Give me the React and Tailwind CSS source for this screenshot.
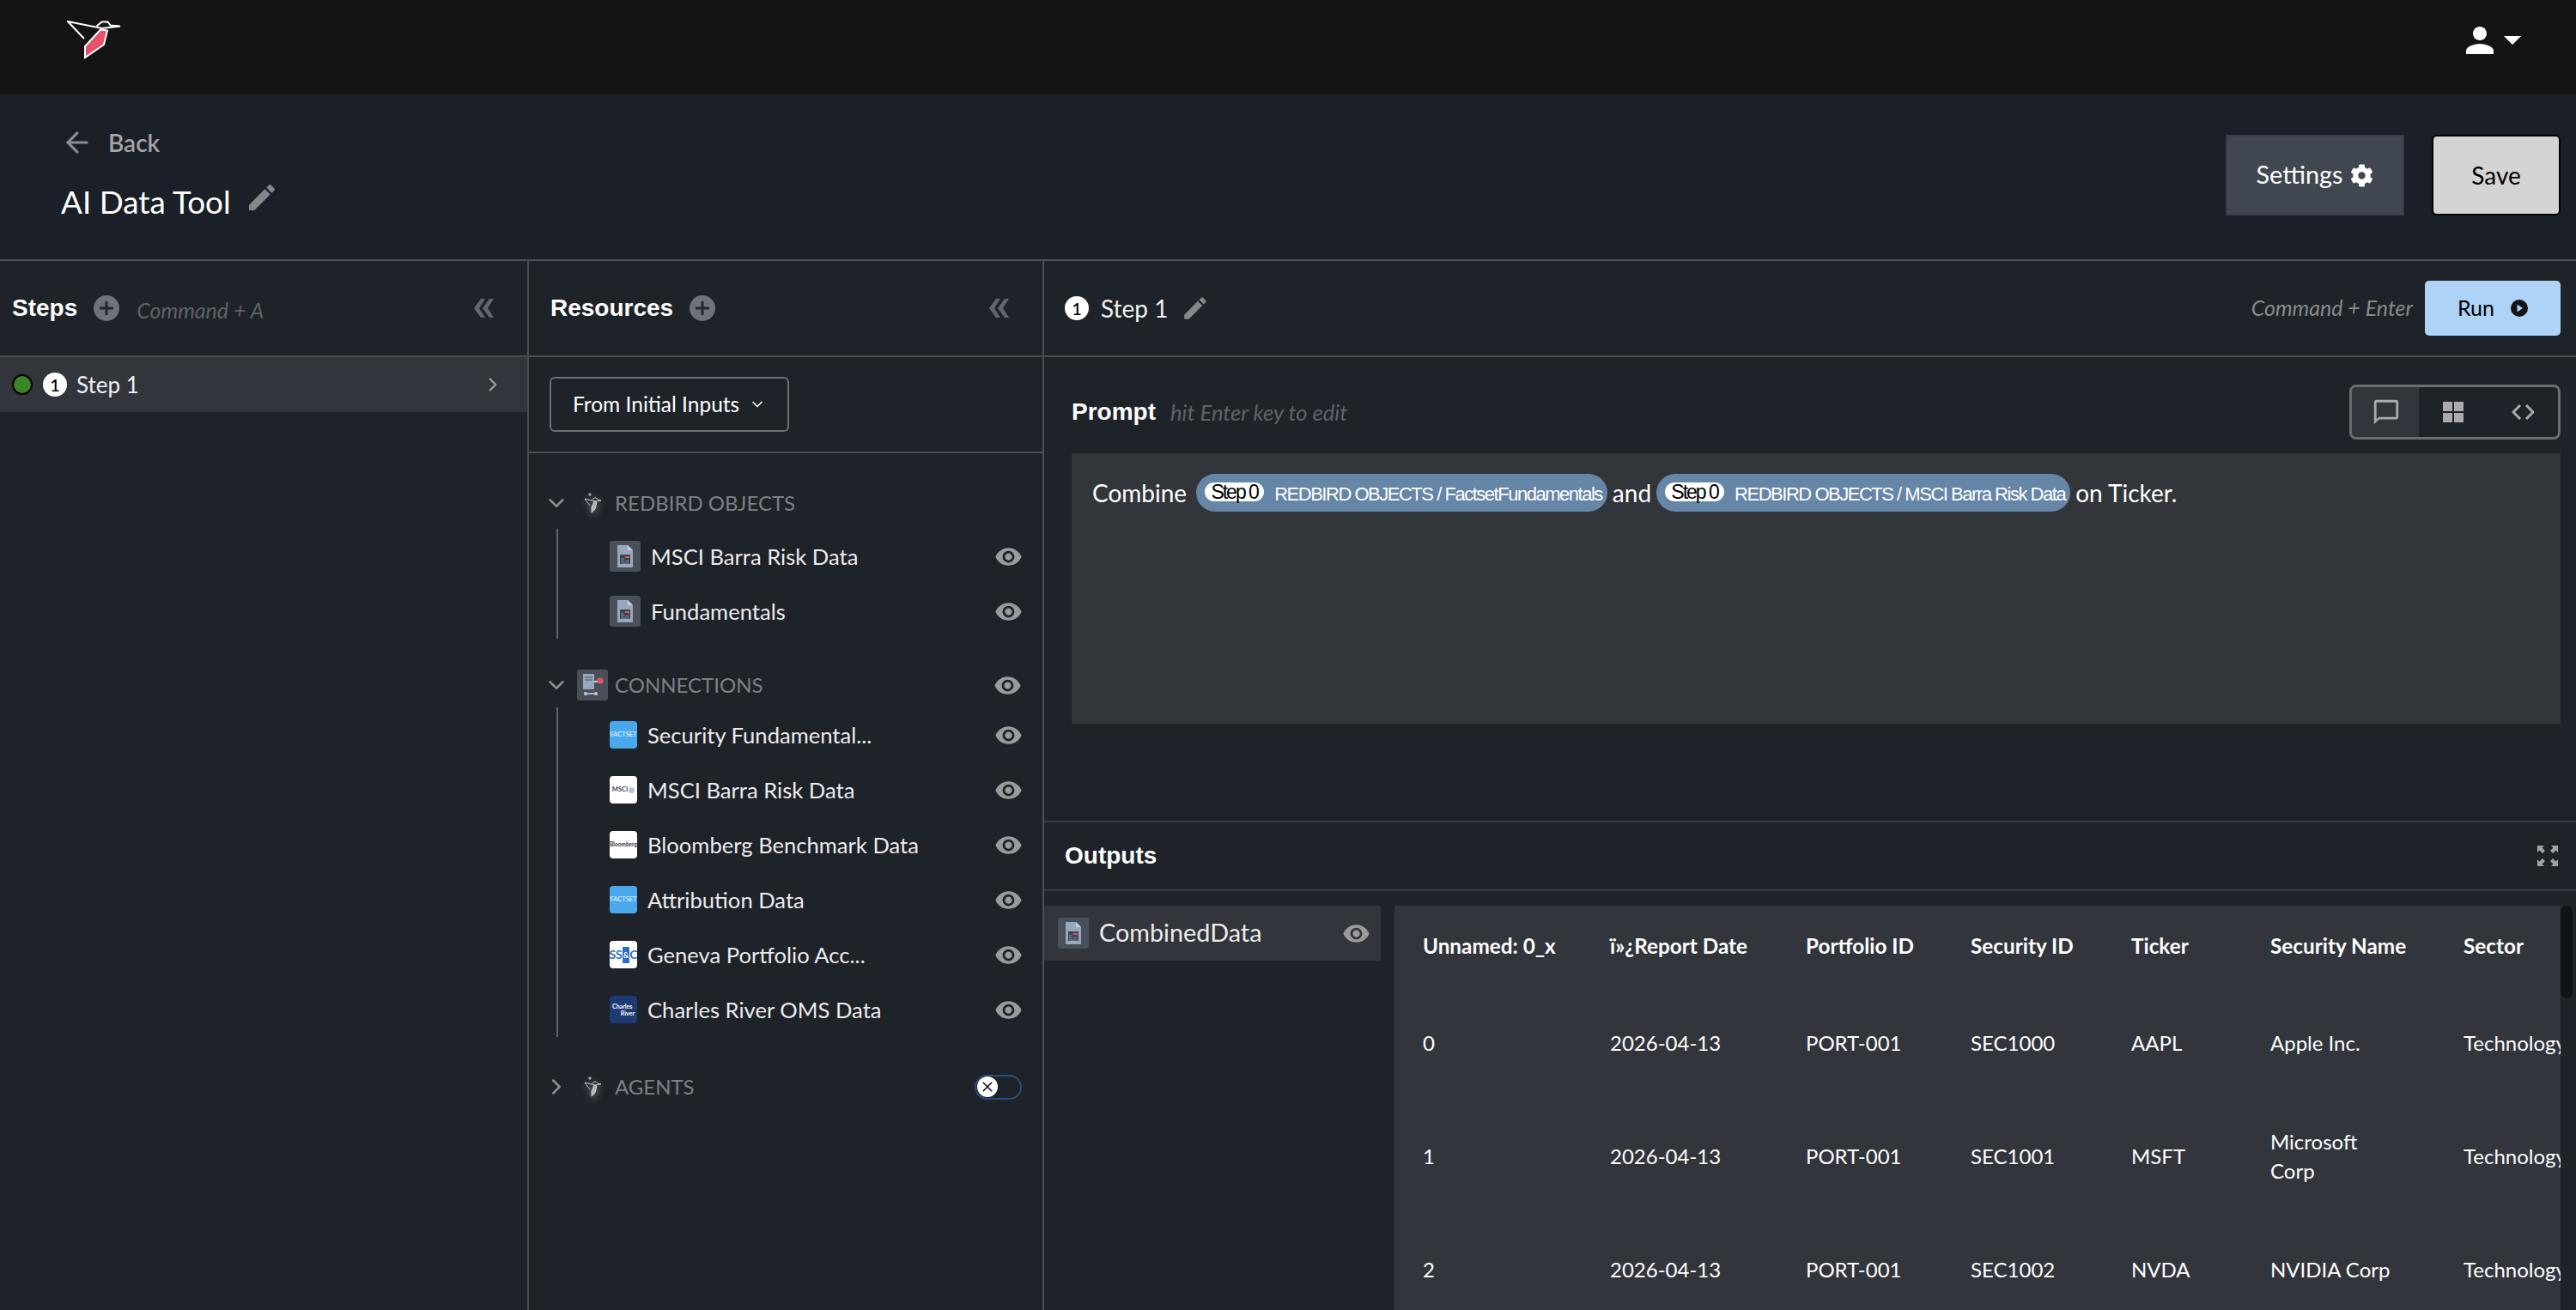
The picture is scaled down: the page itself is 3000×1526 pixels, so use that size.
import { ArrowLeft, ChevronDown, ChevronRight } from 'lucide-react'
import { MdEdit, MdVisibility, MdPerson, MdChatBubbleOutline, MdClose } from 'react-icons/md'
import { FaCog } from 'react-icons/fa'

const arial = "[font-family:'Liberation_Sans',Arial,sans-serif]"

function Logo({ className }) {
  return (
    <svg viewBox="0 0 63 46" className={className} fill="none" stroke="#fff" strokeWidth="2">
      <path d="M20 21 1 1l40 8 21-2.500-11.500-1-3-4h-7l-6 5" />
      <path d="M39 10.500 47 11.500 43 28 21 43 21 30Z" fill="#e5526a" />
    </svg>
  )
}

function BirdIcon() {
  return (
    <div className="w-[36px] h-[36px] flex items-center justify-center">
      <svg viewBox="0 0 20 24" className="w-[20px] h-[24px] drop-shadow-[0_3px_4px_rgba(255,255,255,0.45)]" fill="none" stroke="#d5d7da" strokeWidth="0.9">
        <path d="M7 0v4M5 2h4" />
        <path d="M7 15 1 7l12 3 7-1-4-1-2-2h-2l-3 3" />
        <path d="M12 10l3 1-2 8-4 4v-6z" fill="#aeb1b5" />
      </svg>
    </div>
  )
}

function DocIcon() {
  return (
    <div className="w-[36px] h-[36px] shrink-0 rounded-[3px] bg-[#4a505a] flex items-center justify-center">
      <svg viewBox="0 0 20 26" className="w-[20px] h-[26px]">
        <path d="M1 0h12l6 6v20H1z" fill="#97a7bd" />
        <path d="M13 0l6 6h-6z" fill="#c5d0de" />
        <rect x="4" y="11" width="12" height="11" fill="#3d4450" />
        <rect x="10" y="13" width="5" height="2" fill="#e5526a" />
        <path d="M5 16h4M5 18.500h4M10.500 18.500h4M5 21h10" stroke="#97a7bd" strokeWidth="0.8" />
      </svg>
    </div>
  )
}

function ConnIcon() {
  return (
    <div className="w-[36px] h-[36px] rounded-[3px] bg-[#4a505a] flex items-center justify-center">
      <svg viewBox="0 0 26 28" className="w-[26px] h-[28px]">
        <rect x="2" y="1" width="13" height="18" fill="#97a7bd" />
        <path d="M4 5h9M4 8h9" stroke="#4a505a" strokeWidth="1.200" />
        <path d="M15 10h5" stroke="#fff" strokeWidth="1.500" />
        <circle cx="22" cy="9" r="3.500" fill="#e5526a" />
        <path d="M5 24h12" stroke="#c5d0de" strokeWidth="1.500" />
        <circle cx="5" cy="24" r="2" fill="#c5d0de" />
        <circle cx="17" cy="24" r="2" fill="#c5d0de" />
      </svg>
    </div>
  )
}

function PlusCircle() {
  return (
    <svg viewBox="0 0 30 30" className="w-[30px] h-[30px] shrink-0">
      <circle cx="15" cy="15" r="15" fill="#6f7278" />
      <path d="M15 7v16M7 15h16" stroke="#23262c" strokeWidth="3" />
    </svg>
  )
}

function Collapse() {
  return (
    <svg viewBox="0 0 25 22" className="w-[25px] h-[22px]" fill="#63666c">
      <path d="M9 0h5L7 11l7 11H9L1 11zM19 0h5l-7 11 7 11h-5L11 11z" />
    </svg>
  )
}

function Eye() {
  return <MdVisibility className="w-[33px] h-[33px] text-[#9a9b9d] shrink-0" />
}

function NumberBadge() {
  return (
    <span className="w-[28px] h-[28px] rounded-full bg-white text-black text-[20px] font-medium flex items-center justify-center shrink-0">1</span>
  )
}

function FactsetTile() {
  return (
    <div className="w-[32px] h-[32px] rounded-[4px] bg-[#4aa8ec] flex items-center justify-center overflow-hidden text-[#cfe8fb] text-[7.500px] font-bold">FACTSET</div>
  )
}

function MsciTile() {
  return (
    <div className="w-[32px] h-[32px] rounded-[4px] bg-white flex items-center justify-center gap-[1px] overflow-hidden text-[#3a3f55] text-[7.500px] font-bold">
      MSCI<span className="w-[7px] h-[7px] rounded-full bg-[#bcc2e4]" />
    </div>
  )
}

function BloombergTile() {
  return (
    <div className="w-[32px] h-[32px] rounded-[4px] bg-white flex items-center justify-center overflow-hidden text-[#333] text-[6.500px] font-bold">Bloomberg</div>
  )
}

function SsncTile() {
  return (
    <div className="w-[32px] h-[32px] rounded-[4px] bg-white flex items-center justify-center overflow-hidden text-[#2a6fc4] text-[14px] font-bold leading-none whitespace-nowrap">
      SS<span className="bg-[#2a6fc4] text-white text-[9px] py-[5px] px-[1px]">&amp;</span>C
    </div>
  )
}

function CharlesTile() {
  return (
    <div className="w-[32px] h-[32px] rounded-[4px] bg-[#1d3a72] flex flex-col justify-center overflow-hidden text-white text-[7px] leading-[8px] font-bold px-[3px]">
      <span>Charles</span>
      <span className="text-right">River</span>
    </div>
  )
}

const connections = [
  { name: 'Security Fundamental...', Tile: FactsetTile },
  { name: 'MSCI Barra Risk Data', Tile: MsciTile },
  { name: 'Bloomberg Benchmark Data', Tile: BloombergTile },
  { name: 'Attribution Data', Tile: FactsetTile },
  { name: 'Geneva Portfolio Acc...', Tile: SsncTile },
  { name: 'Charles River OMS Data', Tile: CharlesTile },
]

function SectionHeader({ label, icon, open = true, right }) {
  const Arrow = open ? ChevronDown : ChevronRight
  return (
    <div className="h-[44px] flex items-center pl-[17px] pr-[24px]">
      <Arrow className="w-[30px] h-[30px] text-[#8a8d91] shrink-0" strokeWidth={2} />
      <div className="ml-[9px] mr-[8px]">{icon}</div>
      <span className="flex-1 text-[24px] text-[#7d8085]">{label}</span>
      {right}
    </div>
  )
}

function ResourceRow({ icon, name }) {
  return (
    <div className="h-[64px] flex items-center gap-[12px] pl-[60px] pr-[23px]">
      {icon}
      <span className="flex-1 text-[25.600px] text-[#ececec] whitespace-nowrap mt-[1px]">{name}</span>
      <Eye />
    </div>
  )
}

function Chip({ children }) {
  return (
    <span className={`h-[44px] rounded-[22px] bg-[#6686a7] flex items-center pl-[10px] pr-[6px] text-white ${arial}`}>
      <span className="h-[22px] w-[69px] rounded-full bg-white text-black text-[23px] tracking-[-2px] flex items-center justify-center -mt-[2px]">Step 0</span>
      <span className="ml-[12px] text-[22px] tracking-[-1.480px] whitespace-nowrap mt-[3px]">{children}</span>
    </span>
  )
}

const columns = [
  { key: 'id', label: 'Unnamed: 0_x', width: 'w-[218px]' },
  { key: 'date', label: 'ï»¿Report Date', width: 'w-[228px]' },
  { key: 'portfolio', label: 'Portfolio ID', width: 'w-[192px]' },
  { key: 'security', label: 'Security ID', width: 'w-[187px]' },
  { key: 'ticker', label: 'Ticker', width: 'w-[162px]' },
  { key: 'name', label: 'Security Name', width: 'w-[225px]' },
  { key: 'sector', label: 'Sector', width: 'w-[200px]' },
]

const rows = [
  { id: '0', date: '2026-04-13', portfolio: 'PORT-001', security: 'SEC1000', ticker: 'AAPL', name: 'Apple Inc.', sector: 'Technology' },
  { id: '1', date: '2026-04-13', portfolio: 'PORT-001', security: 'SEC1001', ticker: 'MSFT', name: 'Microsoft Corp', sector: 'Technology' },
  { id: '2', date: '2026-04-13', portfolio: 'PORT-001', security: 'SEC1002', ticker: 'NVDA', name: 'NVIDIA Corp', sector: 'Technology' },
]

function DataTable() {
  return (
    <div className="flex-1 min-w-0 flex items-start">
      <div className="w-[1358px] h-full bg-[#32353c] overflow-hidden pl-[33px]">
        <table className="table-fixed w-[1412px] text-white text-[24px]">
          <thead>
            <tr className="h-[94px]">
              {columns.map((c) => (
                <th key={c.key} className={`${c.width} text-left font-bold text-[24.300px] p-0`}>{c.label}</th>
              ))}
            </tr>
          </thead>
          <tbody>
            {rows.map((r) => (
              <tr key={r.id} className="h-[132px]">
                {columns.map((c) => (
                  <td key={c.key} className="p-0 align-middle">
                    <div className="max-w-[150px] leading-[34px]">{r[c.key]}</div>
                  </td>
                ))}
              </tr>
            ))}
          </tbody>
        </table>
      </div>
      <div className="w-[14px] h-[108px] rounded-full bg-[#101318]" />
    </div>
  )
}

export default function App() {
  return (
    <div className="w-[3000px] h-[1526px] overflow-hidden flex flex-col bg-[#1e2229] text-white font-[Lato]">
      <header className="h-[110px] shrink-0 bg-[#141414] flex items-center justify-between pl-[78px] pr-[64px]">
        <Logo className="w-[63px] h-[46px] -mt-[16px]" />
        <div className="flex items-center gap-[4px] -mt-[16px]">
          <MdPerson className="w-[48px] h-[48px] text-white" />
          <svg viewBox="0 0 20 10" className="w-[20px] h-[10px]"><path d="M0 0h20L10 10z" fill="#fff" /></svg>
        </div>
      </header>

      <div className="h-[194px] shrink-0 bg-[#1b2028] border-b-2 border-[#4a4d52] flex justify-between pl-[71px] pr-[18px]">
        <div className="pt-[35px]">
          <div className="flex items-center gap-[17px] text-[#a2a4a7]">
            <ArrowLeft className="w-[38px] h-[38px] text-[#8a8d91]" strokeWidth={2} />
            <span className="text-[28px] font-semibold">Back</span>
          </div>
          <div className="mt-[26px] flex items-center gap-[16px]">
            <span className="text-[36.800px] leading-[44px]">AI Data Tool</span>
            <MdEdit className="w-[40px] h-[40px] text-[#85878b] -mt-[10px]" />
          </div>
        </div>
        <div className="pt-[47px] flex items-start gap-[32px]">
          <button className="w-[208px] h-[94px] bg-[#414750] border-2 border-[#383d45] text-white text-[28.800px] flex items-center justify-center gap-[9px]">
            Settings <FaCog className="w-[27px] h-[27px]" />
          </button>
          <button className="w-[150px] h-[94px] bg-[#d4d4d4] border-2 border-black rounded-[6px] text-black text-[28px]">Save</button>
        </div>
      </div>

      <div className="flex-1 flex min-h-0">
        <aside className="w-[616px] shrink-0 border-r-2 border-[#4a4d52]">
          <div className="h-[112px] border-b-2 border-[#4a4d52] flex items-center pl-[14px] pr-[38px]">
            <span className={`text-[28px] font-bold ${arial}`}>Steps</span>
            <span className="ml-[19px]"><PlusCircle /></span>
            <span className="ml-[20px] flex-1 italic text-[25px] text-[#5f6368] mt-[6px]">Command + A</span>
            <Collapse />
          </div>
          <div className="h-[64px] bg-[#32353c] flex items-center pl-[14px] pr-[27px]">
            <span className="w-[24px] h-[24px] rounded-full bg-[#3a8526] border-2 border-black shrink-0" />
            <span className="ml-[12px]"><NumberBadge /></span>
            <span className="ml-[11px] flex-1 text-[26px] text-[#f0f0f0]">Step 1</span>
            <ChevronRight className="w-[26px] h-[26px] text-[#a2a4a7]" strokeWidth={2} />
          </div>
        </aside>

        <aside className="w-[600px] shrink-0 border-r-2 border-[#4a4d52]">
          <div className="h-[112px] border-b-2 border-[#4a4d52] flex items-center pl-[25px] pr-[38px]">
            <span className={`text-[28px] font-bold ${arial}`}>Resources</span>
            <span className="ml-[19px] flex-1"><PlusCircle /></span>
            <Collapse />
          </div>
          <div className="h-[112px] border-b-2 border-[#4a4d52] pt-[23px] pl-[24px]">
            <button className="w-[279px] h-[64px] rounded-[6px] border-2 border-[#6b6e73] flex items-center pl-[25px] text-[24.500px] text-white">
              From Initial Inputs
              <ChevronDown className="ml-[11px] w-[20px] h-[20px]" strokeWidth={2} />
            </button>
          </div>

          <div className="mt-[36px]">
            <SectionHeader label="REDBIRD OBJECTS" icon={<BirdIcon />} />
            <div className="mt-[8px] ml-[32px] border-l-2 border-[#5f6268]">
              {['MSCI Barra Risk Data', 'Fundamentals'].map((name) => (
                <ResourceRow key={name} icon={<DocIcon />} name={name} />
              ))}
            </div>
          </div>

          <div className="mt-[32px]">
            <SectionHeader label="CONNECTIONS" icon={<ConnIcon />} right={<Eye />} />
            <div className="mt-[4px] ml-[32px] border-l-2 border-[#5f6268]">
              {connections.map(({ name, Tile }) => (
                <ResourceRow key={name} icon={<Tile />} name={name} />
              ))}
            </div>
          </div>

          <div className="mt-[36px]">
            <SectionHeader
              label="AGENTS"
              icon={<BirdIcon />}
              open={false}
              right={
                <div className="w-[55px] h-[29px] rounded-full border-2 border-[#2e4a7a] flex items-center pl-[1px]">
                  <span className="w-[24px] h-[24px] rounded-full bg-white flex items-center justify-center">
                    <MdClose className="w-[20px] h-[20px] text-[#23262c]" />
                  </span>
                </div>
              }
            />
          </div>
        </aside>

        <main className="flex-1 min-w-0 flex flex-col">
          <div className="h-[112px] shrink-0 border-b-2 border-[#4a4d52] flex items-center pl-[24px] pr-[18px]">
            <NumberBadge />
            <span className="ml-[14px] text-[28px] text-[#f0f0f0]">Step 1</span>
            <MdEdit className="ml-[15px] w-[34px] h-[34px] text-[#85878b]" />
            <span className="ml-auto italic text-[25px] text-[#8a8a8a]">Command + Enter</span>
            <button className="ml-[14px] w-[158px] h-[64px] rounded-[5px] bg-[#add3f6] text-black text-[25px] flex items-center justify-center gap-[19px]">
              Run
              <svg viewBox="0 0 20 20" className="w-[20px] h-[20px]">
                <circle cx="10" cy="10" r="10" fill="#141414" />
                <path d="M7.500 5.500 14 10l-6.500 4.500z" fill="#add3f6" />
              </svg>
            </button>
          </div>

          <div className="h-[540px] shrink-0 pl-[32px] pr-[18px]">
            <div className="h-[112px] flex items-center justify-between pt-[16px]">
              <div className="flex items-center">
                <span className={`text-[28px] font-bold ${arial}`}>Prompt</span>
                <span className="ml-[17px] italic text-[25.600px] text-[#5f6368]">hit Enter key to edit</span>
              </div>
              <div className="w-[246px] h-[64px] rounded-[8px] border-[3px] border-[#6a6d72] flex overflow-hidden">
                <div className="w-[78px] bg-[#32353c] flex items-center justify-center pl-[2px]">
                  <MdChatBubbleOutline className="w-[34px] h-[34px] text-[#a9abae]" />
                </div>
                <div className="w-[80px] flex items-center justify-center">
                  <svg viewBox="0 0 24 24" className="w-[24px] h-[24px]" fill="#a9abae">
                    <rect width="11" height="11" />
                    <rect x="13" width="11" height="11" />
                    <rect y="13" width="11" height="11" />
                    <rect x="13" y="13" width="11" height="11" />
                  </svg>
                </div>
                <div className="flex-1 flex items-center justify-center">
                  <svg viewBox="0 0 26 18" className="w-[26px] h-[18px]" fill="none" stroke="#a9abae" strokeWidth="3">
                    <path d="M10 1 2 9l8 8M17 1l8 8-8 8" />
                  </svg>
                </div>
              </div>
            </div>
            <div className="h-[315px] bg-[#32363b] pl-[24px] pt-[24px]">
              <div className="flex items-center text-[28px] text-white whitespace-nowrap">
                <span className="mr-[11px]">Combine</span>
                <Chip>REDBIRD OBJECTS / FactsetFundamentals</Chip>
                <span className="mx-[6px]">and</span>
                <Chip>REDBIRD OBJECTS / MSCI Barra Risk Data</Chip>
                <span className="ml-[6px]">on Ticker.</span>
              </div>
            </div>
          </div>

          <div className="h-[82px] shrink-0 border-y-2 border-[#3a3d42] flex items-center justify-between pl-[24px] pr-[20px]">
            <span className={`text-[28px] font-bold ${arial}`}>Outputs</span>
            <svg viewBox="0 0 26 26" className="w-[26px] h-[26px]" fill="#a2a4a7">
              <path d="M1 1h8L6.500 3.500 10 7 7 10 3.500 6.500 1 9zM25 1h-8l2.500 2.500L16 7l3 3 3.500-3.500L25 9zM1 25h8l-2.500-2.500L10 19l-3-3-3.500 3.500L1 17zM25 25h-8l2.500-2.500L16 19l3-3 3.500 3.500L25 17z" />
            </svg>
          </div>

          <div className="flex-1 min-h-0 pt-[17px] flex gap-[16px]">
            <div className="w-[392px] h-[64px] shrink-0 bg-[#32353c] flex items-center pl-[16px] pr-[12px]">
              <DocIcon />
              <span className="ml-[12px] flex-1 text-[28.800px] text-[#ececec]">CombinedData</span>
              <Eye />
            </div>
            <DataTable />
          </div>
        </main>
      </div>
    </div>
  )
}
